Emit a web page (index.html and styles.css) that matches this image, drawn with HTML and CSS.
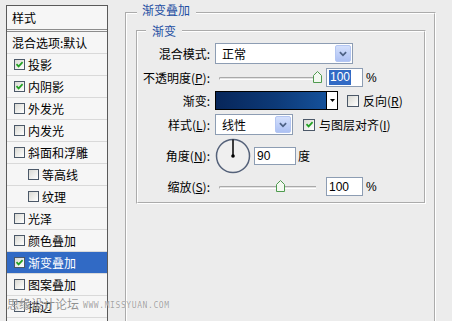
FILE: index.html
```html
<!DOCTYPE html>
<html lang="zh-CN">
<head>
<meta charset="utf-8">
<title>图层样式 - 渐变叠加</title>
<link rel="stylesheet" href="styles.css">
</head>
<body>
<div class="dialog">
  <nav class="styles-panel">
    <div class="panel-head">样式</div>
    <div class="item blend">混合选项:默认</div>
    <div class="item"><span class="cb"><svg viewBox="0 0 9 9"><polyline points="1.5,4.2 3.6,6.4 7.6,2.2"/></svg></span>投影</div>
    <div class="item"><span class="cb"><svg viewBox="0 0 9 9"><polyline points="1.5,4.2 3.6,6.4 7.6,2.2"/></svg></span>内阴影</div>
    <div class="item"><span class="cb"></span>外发光</div>
    <div class="item"><span class="cb"></span>内发光</div>
    <div class="item"><span class="cb"></span>斜面和浮雕</div>
    <div class="item sub"><span class="cb"></span>等高线</div>
    <div class="item sub"><span class="cb"></span>纹理</div>
    <div class="item"><span class="cb"></span>光泽</div>
    <div class="item"><span class="cb"></span>颜色叠加</div>
    <div class="item selected"><span class="cb"><svg viewBox="0 0 9 9"><polyline points="1.5,4.2 3.6,6.4 7.6,2.2"/></svg></span>渐变叠加</div>
    <div class="item"><span class="cb"></span>图案叠加</div>
    <div class="item"><span class="cb"></span>描边</div>
    <div class="item"></div>
  </nav>

  <main class="main">
    <fieldset class="group outer">
      <legend>渐变叠加</legend>
      <fieldset class="group inner">
        <legend>渐变</legend>
        <div class="form">
          <span class="lbl">混合模式:</span>
          <div class="ctl">
            <div class="select mode"><span class="val">正常</span><span class="dd"><svg viewBox="0 0 9 6"><polyline points="1,1 4.5,4.5 8,1"/></svg></span></div>
          </div>

          <span class="lbl">不透明度(<u>P</u>):</span>
          <div class="ctl">
            <div class="slider"><span class="track"></span><svg class="thumb" style="left:98px" viewBox="0 0 9 12"><polygon points="0.5,4.5 4.5,0.5 8.5,4.5 8.5,11.5 0.5,11.5"/></svg></div>
            <span class="field pct"><span class="hl">100</span></span>
            <span class="unit">%</span>
          </div>

          <span class="lbl">渐变:</span>
          <div class="ctl">
            <div class="gradient"><span class="swatch"></span><span class="gdd"><svg viewBox="0 0 7 4"><polygon points="0,0 7,0 3.5,4"/></svg></span></div>
            <span class="cb off-gap"></span>
            <span class="cblabel">反向(<u>R</u>)</span>
          </div>

          <span class="lbl">样式(<u>L</u>):</span>
          <div class="ctl">
            <div class="select style"><span class="val">线性</span><span class="dd"><svg viewBox="0 0 9 6"><polyline points="1,1 4.5,4.5 8,1"/></svg></span></div>
            <span class="cb align-gap"><svg viewBox="0 0 9 9"><polyline points="1.5,4.2 3.6,6.4 7.6,2.2"/></svg></span>
            <span class="cblabel">与图层对齐(<u>I</u>)</span>
          </div>

          <span class="lbl">角度(<u>N</u>):</span>
          <div class="ctl">
            <svg class="dial" viewBox="0 0 36 36"><circle class="ring" cx="18" cy="18" r="16.5"/><line x1="18" y1="18" x2="18" y2="1.5"/><circle class="hub" cx="18" cy="18" r="1.8"/></svg>
            <span class="field angle">90</span>
            <span class="unit deg">度</span>
          </div>

          <span class="lbl">缩放(<u>S</u>):</span>
          <div class="ctl">
            <div class="slider"><span class="track"></span><svg class="thumb" style="left:61px" viewBox="0 0 9 12"><polygon points="0.5,4.5 4.5,0.5 8.5,4.5 8.5,11.5 0.5,11.5"/></svg></div>
            <span class="field pct">100</span>
            <span class="unit">%</span>
          </div>
        </div>
      </fieldset>
    </fieldset>
  </main>

  <div class="watermark"><span class="wm-cn">思缘设计论坛</span><span class="wm-en">WWW.MISSYUAN.COM</span></div>
</div>
</body>
</html>
```

FILE: styles.css
```css
html, body {
  margin: 0;
  padding: 0;
}

body {
  background: #ececec;
  color: #000;
  font-family: "Noto Sans CJK SC", "Liberation Sans", sans-serif;
  font-size: 12px;
  line-height: 1;
  overflow: hidden;
}

.dialog {
  display: flex;
  align-items: flex-start;
  height: 321px;
  position: relative;
  overflow: hidden;
}

/* ---------- left style list ---------- */
.styles-panel {
  flex: none;
  width: 102px;
  box-sizing: border-box;
  margin: 5px 0 0 6px;
  border: 1px solid #5a5a5a;
  border-bottom: none;
  background: #f6f6f6;
  height: 330px;
}

.panel-head {
  height: 23px;
  line-height: 23px;
  padding-left: 5px;
  border-bottom: 3px double #8c8c8c;
}

.item {
  height: 21px;
  border-bottom: 1px solid #d9d9d9;
  display: flex;
  align-items: center;
  padding-left: 7px;
  gap: 3px;
  white-space: nowrap;
}

.item.blend {
  padding-left: 5px;
}

.item.sub {
  padding-left: 21px;
}

.item.selected {
  background: #316ac5;
  color: #fff;
}

/* checkbox */
.cb {
  flex: none;
  width: 11px;
  height: 11px;
  box-sizing: border-box;
  border: 1px solid #4b5868;
  background: linear-gradient(135deg, #d9d9d3 0%, #f4f4f2 70%, #ffffff 100%);
  display: inline-flex;
  align-items: center;
  justify-content: center;
}

.cb svg {
  width: 9px;
  height: 9px;
}

.cb polyline {
  fill: none;
  stroke: #21a121;
  stroke-width: 1.7;
}

/* ---------- right panel ---------- */
.main {
  flex: none;
  margin-left: 17px;
}

.group {
  margin: 0;
  min-width: 0;
  border: 2px groove #ffffff;
}

.group legend {
  font-size: 12px;
  line-height: 14px;
  color: #1e4fa3;
}

.outer {
  margin-top: 3px;
  width: 311px;
  box-sizing: border-box;
  height: 340px;
  padding: 1px 8px 0 9px;
}

.outer > legend {
  margin-left: 1px;
  padding: 0 6px 6px 5px;
}

.inner {
  padding: 5px 0 6px 0;
}

.inner > legend {
  margin-left: 8px;
  padding: 0 6px;
}

.form {
  display: grid;
  grid-template-columns: 72px 1fr;
  grid-template-rows: 21px 19px 19px 21px 34px 19px;
  column-gap: 5px;
  row-gap: 4px;
}

.lbl {
  text-align: right;
  align-self: center;
  white-space: nowrap;
}

.ctl {
  display: flex;
  align-items: center;
}

u {
  text-decoration: underline;
  text-underline-offset: 1px;
}

/* select */
.select {
  box-sizing: border-box;
  height: 21px;
  border: 1px solid #8d9db3;
  background: #fff;
  display: flex;
  align-items: center;
  justify-content: space-between;
  padding: 0 1px 0 6px;
}

.select.mode {
  width: 138px;
}

.select.style {
  width: 78px;
}

.select .dd {
  width: 16px;
  height: 17px;
  box-sizing: border-box;
  border: 1px solid #b4c6f2;
  border-radius: 2px;
  background: linear-gradient(180deg, #d4e0fc 0%, #bccdf7 60%, #adc1f3 100%);
  display: flex;
  align-items: center;
  justify-content: center;
}

.select .dd svg {
  width: 8px;
  height: 6px;
}

.select .dd polyline {
  fill: none;
  stroke: #4d6185;
  stroke-width: 2;
}

/* slider */
.slider {
  position: relative;
  width: 107px;
  height: 19px;
  flex: none;
}

.track {
  position: absolute;
  left: 4px;
  right: 6px;
  top: 9px;
  height: 3px;
  box-sizing: border-box;
  border-top: 1px solid #a9a9a9;
  border-left: 1px solid #a9a9a9;
  border-bottom: 1px solid #ffffff;
  border-radius: 2px 0 0 2px;
  background: #e2e2e2;
}

.thumb {
  position: absolute;
  top: 3px;
  width: 9px;
  height: 12px;
}

.thumb polygon {
  fill: #f3f8f1;
  stroke: #4f9b4f;
  stroke-width: 1;
}

/* text fields */
.field {
  box-sizing: border-box;
  height: 19px;
  border: 1px solid #8d9db3;
  background: #fff;
  display: inline-flex;
  align-items: center;
  padding-left: 2px;
  font-family: "Liberation Sans", "Noto Sans CJK SC", sans-serif;
  font-size: 12px;
}

.field.pct {
  width: 37px;
  margin-left: 4px;
}

.field.angle {
  width: 42px;
  height: 18px;
  margin-left: 3px;
}

.hl {
  background: #316ac5;
  color: #fff;
  padding: 1px 1px;
  line-height: 13px;
}

.unit {
  margin-left: 3px;
  font-family: "Liberation Sans", "Noto Sans CJK SC", sans-serif;
}

.unit.deg {
  font-family: "Noto Sans CJK SC", sans-serif;
  margin-left: 2px;
}

/* gradient picker */
.gradient {
  display: flex;
  width: 123px;
  height: 19px;
  box-sizing: border-box;
  border: 1px solid #000;
  flex: none;
}

.swatch {
  flex: 1;
  background: linear-gradient(90deg, #07265a 0%, #0d3a78 55%, #15519a 100%);
  border-right: 1px solid #000;
}

.gdd {
  width: 10px;
  background: #fff;
  display: flex;
  align-items: center;
  justify-content: center;
}

.gdd svg {
  width: 5px;
  height: 3px;
}

.gdd polygon {
  fill: #000;
}

.off-gap {
  margin-left: 9px;
  width: 12px;
  height: 12px;
}

.align-gap {
  margin-left: 10px;
  width: 12px;
  height: 12px;
}

.cblabel {
  margin-left: 4px;
  white-space: nowrap;
}

/* angle dial */
.dial {
  width: 36px;
  height: 36px;
  flex: none;
}

.dial .ring {
  fill: #efefef;
  stroke: #55627a;
  stroke-width: 1.5;
}

.dial line {
  stroke: #000;
  stroke-width: 1.5;
}

.dial .hub {
  fill: #000;
}

/* watermark overlay */
.watermark {
  position: absolute;
  left: 7px;
  top: 298px;
  display: flex;
  align-items: center;
  gap: 4px;
  pointer-events: none;
  color: rgba(110, 110, 110, 0.75);
  text-shadow: 0 0 1px #fff;
}

.wm-cn {
  font-family: "Noto Sans CJK SC", sans-serif;
  font-size: 12px;
}

.wm-en {
  font-family: "DejaVu Sans Mono", monospace;
  font-size: 8px;
  letter-spacing: 0.6px;
  color: rgba(140, 140, 140, 0.8);
  margin-top: 3px;
}
```
